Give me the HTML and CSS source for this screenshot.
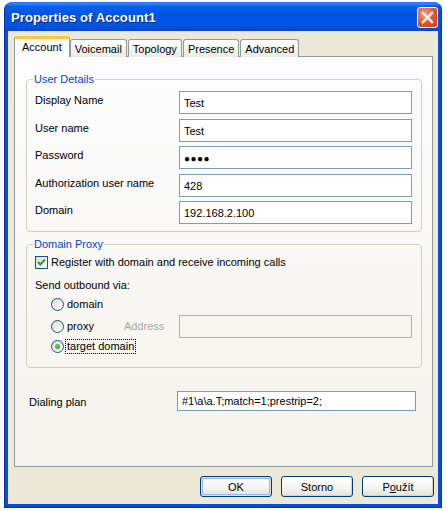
FILE: index.html
```html
<!DOCTYPE html>
<html>
<head>
<meta charset="utf-8">
<link rel="stylesheet" href="styles.css">
</head>
<body>
<div class="window">
  <div class="titlebar">
    <span class="title">Properties of Account1</span>
    <span class="close"><svg width="21" height="21" viewBox="0 0 21 21"><path d="M6 6 L15 15 M15 6 L6 15" stroke="#fff" stroke-width="2.4" stroke-linecap="square"/></svg></span>
  </div>
  <div class="client">
    <div class="tabs">
      <span class="tab active">Account</span>
      <span class="tab">Voicemail</span>
      <span class="tab">Topology</span>
      <span class="tab">Presence</span>
      <span class="tab">Advanced</span>
    </div>
    <div class="panel">
      <fieldset class="group details">
        <legend>User Details</legend>
        <div class="row"><span class="label">Display Name</span><span class="input">Test</span></div>
        <div class="row"><span class="label">User name</span><span class="input">Test</span></div>
        <div class="row"><span class="label">Password</span><span class="input pwd">●●●●</span></div>
        <div class="row"><span class="label">Authorization user name</span><span class="input">428</span></div>
        <div class="row"><span class="label">Domain</span><span class="input">192.168.2.100</span></div>
      </fieldset>
      <fieldset class="group proxy">
        <legend>Domain Proxy</legend>
        <div class="check"><span class="box"><svg width="11" height="11" viewBox="0 0 11 11"><path d="M2 5 L4.3 7.5 L9 2.5" fill="none" stroke="#21A121" stroke-width="2"/></svg></span>Register with domain and receive incoming calls</div>
        <div class="sendvia">Send outbound via:</div>
        <div class="radios">
          <div class="radio r1"><span class="circle"></span>domain</div>
          <div class="radio r2"><span class="circle"></span>proxy<span class="addr">Address</span><span class="input disabled"></span></div>
          <div class="radio r3"><span class="circle on"><span class="dot"></span></span><span class="focus">target domain</span></div>
        </div>
      </fieldset>
      <div class="dialrow"><span class="label">Dialing plan</span><span class="input dial">#1\a\a.T;match=1;prestrip=2;</span></div>
    </div>
    <div class="buttons">
      <span class="btn default">OK</span>
      <span class="btn">Storno</span>
      <span class="btn">P<u>o</u>užít</span>
    </div>
  </div>
</div>
</body>
</html>
```
FILE: styles.css
```css
* { box-sizing: border-box; }
html, body { margin: 0; padding: 0; background: #fff; }
body { font-family: "Liberation Sans", Arial, sans-serif; font-size: 11px; color: #000; }

.window {
  margin: 2px 0 0 4px;
  width: 438px;
  height: 506px;
  border-radius: 8px 8px 0 0;
  background: #0A4ED8;
  display: flex;
  flex-direction: column;
  overflow: hidden;
  border: 1px solid #0831A8;
  border-top-color: #2B71F0;
}
.titlebar {
  height: 28px;
  flex: none;
  display: flex;
  align-items: center;
  justify-content: space-between;
  padding: 0 3px 0 6px;
  background: linear-gradient(#3A8CFF 0%, #0A5FEA 12%, #0054E3 40%, #0055E5 80%, #0A47C8 100%);
}
.title {
  color: #fff;
  font-weight: bold;
  font-size: 13px;
  letter-spacing: 0.1px;
  text-shadow: 1px 1px 0 #0A2A80;
}
.close {
  width: 21px;
  height: 21px;
  border: 1px solid #fff;
  border-radius: 3px;
  background: radial-gradient(circle at 35% 30%, #F29A7D 0%, #E1532F 55%, #C8401E 100%);
  display: flex;
  margin-top: 1px;
}
.close svg { display: block; margin: -1px; }
.client {
  flex: 1;
  margin: 0 3px 3px 3px;
  background: #ECE9D8;
  padding: 8px 0 0 6px;
  display: flex;
  flex-direction: column;
}
.tabs {
  display: flex;
  height: 18px;
  align-items: flex-end;
  position: relative;
  z-index: 1;
  margin-bottom: -1px;
  padding-left: 1px;
}
.tab {
  height: 18px;
  padding: 2px 4px 0 4px;
  border: 1px solid #919B9C;
  border-bottom: none;
  border-radius: 3px 3px 0 0;
  background: linear-gradient(#FFFFFF, #ECEBE5);
  margin-right: 1px;
  line-height: 14px;
}
.tab.active {
  height: 21px;
  padding: 2px 7px 0 7px;
  border-top: 3px solid #FFC83C;
  background: #FCFCFE;
  margin-left: -1px;
  margin-right: 0;
  line-height: 13px;
}
.panel {
  width: 419px;
  height: 411px;
  border: 1px solid #919B9C;
  background: linear-gradient(#FCFCFE 0%, #F7F6F1 70%, #F4F3EE 100%);
  padding: 16px 10px 0 11px;
  display: flex;
  flex-direction: column;
}
.group {
  margin: 0;
  border: 1px solid #D0D0BF;
  border-radius: 4px;
  padding: 0 9px 0 8px;
}
.group legend {
  color: #0046D5;
  padding: 0 1px;
  margin-left: -2px;
}
.details { height: 159px; padding-top: 6px; }
.row {
  display: flex;
  align-items: center;
  justify-content: space-between;
  height: 23px;
  margin-bottom: 4.5px;
}
.label { padding-bottom: 5px; }
.input {
  display: block;
  width: 233px;
  height: 23px;
  border: 1px solid #7F9DB9;
  background: #fff;
  padding: 5px 4px 0 4px;
  line-height: 13px;
}
.pwd { font-size: 10px; letter-spacing: 0.5px; padding-top: 5px; }

.proxy { margin-top: 6px; height: 130px; padding-top: 3px; }
.check { display: flex; align-items: center; height: 16px; margin-top: 1px; }
.box {
  width: 13px;
  height: 13px;
  border: 1px solid #1C5180;
  background: linear-gradient(135deg, #DCDCD7, #FFFFFF);
  margin-right: 3px;
  display: flex;
  align-items: center;
  justify-content: center;
}
.sendvia { margin-top: 9px; height: 15px; }
.radios { padding-left: 16px; margin-top: -1px; }
.radio { display: flex; align-items: center; }
.r1 { height: 22px; }
.r2 { height: 22px; }
.r3 { height: 18px; }
.circle {
  width: 13px;
  height: 13px;
  border-radius: 50%;
  border: 1px solid #1C5180;
  background: linear-gradient(135deg, #DCDCD7, #FFFFFF);
  margin-right: 3px;
  display: flex;
  align-items: center;
  justify-content: center;
  flex: none;
}
.dot {
  width: 5px;
  height: 5px;
  border-radius: 50%;
  background: radial-gradient(circle at 40% 40%, #5BD35B, #1F9C1F);
}
.addr { color: #ACA899; margin-left: 30px; margin-right: 15px; }
.input.disabled { width: 233px; background: #F7F6F0; border-color: #A5B4C6; }
.focus { outline: 1px dotted #000; outline-offset: 0; padding: 0 1px; margin-left: -1px; line-height: 13px; }

.dialrow {
  display: flex;
  align-items: center;
  justify-content: space-between;
  margin-top: 23px;
  padding-left: 3px;
}
.dialrow .label { padding-bottom: 0; padding-top: 2px; }
.input.dial { width: 239px; height: 20px; padding-top: 3px; margin-right: 6px; }

.buttons {
  display: flex;
  justify-content: flex-end;
  gap: 9px;
  padding: 9px 4px 0 0;
}
.btn {
  width: 72px;
  height: 21px;
  border: 1px solid #003C74;
  border-radius: 3px;
  background: linear-gradient(#FFFFFF 0%, #F3F3EF 60%, #E3E2DA 100%);
  display: flex;
  align-items: center;
  justify-content: center;
  box-shadow: inset -1px -1px 0 #D6D0C5;
}
.btn.default {
  box-shadow: inset 0 0 0 1px #CEE7FF, inset 0 0 0 2px #98B8EA;
}
```
